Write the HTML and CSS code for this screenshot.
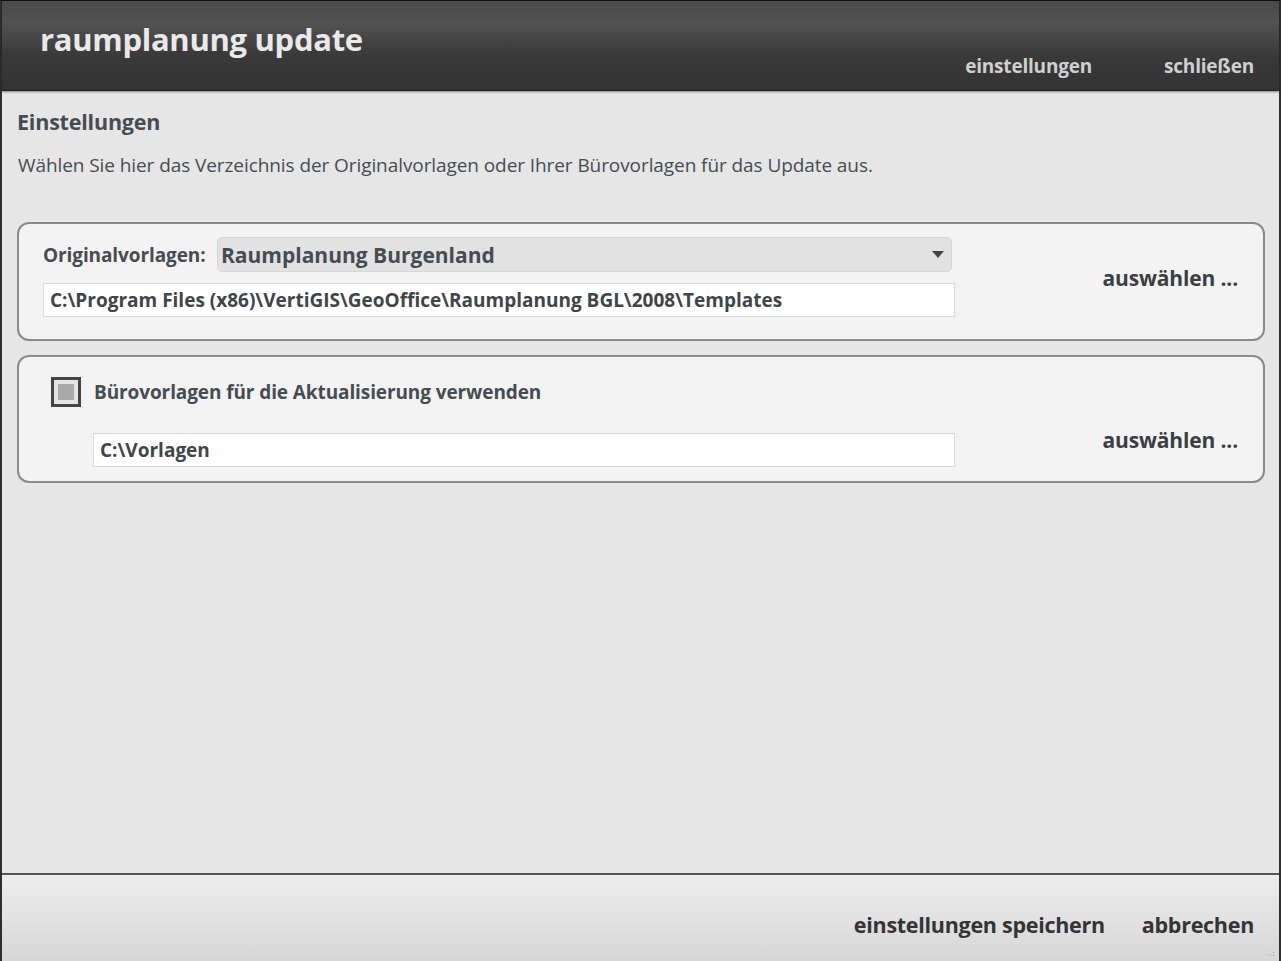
FILE: index.html
```
<!DOCTYPE html>
<html lang="de">
<head>
<meta charset="UTF-8">
<title>raumplanung update</title>
<link rel="stylesheet" href="styles.css">
</head>
<body>

<div class="window">

    <!-- TITLE BAR -->
    <header class="titlebar">
        <h1>raumplanung update</h1>
        <nav class="titlebar-nav">
            <a href="#">einstellungen</a>
            <a href="#">schließen</a>
        </nav>
    </header>

    <!-- CONTENT -->
    <main class="content">
        <h2>Einstellungen</h2>
        <p class="intro">Wählen Sie hier das Verzeichnis der Originalvorlagen oder Ihrer Bürovorlagen für das Update aus.</p>

        <section class="panel panel-original">
            <div class="fields">
                <div class="row">
                    <label class="field-label">Originalvorlagen:</label>
                    <div class="select">
                        <span>Raumplanung Burgenland</span>
                        <span class="caret"></span>
                    </div>
                </div>
                <div class="path">C:\Program Files (x86)\VertiGIS\GeoOffice\Raumplanung BGL\2008\Templates</div>
            </div>
            <a href="#" class="pick">auswählen ...</a>
        </section>

        <section class="panel panel-office">
            <div class="check-row">
                <span class="checkbox"><span></span></span>
                <span class="check-label">Bürovorlagen für die Aktualisierung verwenden</span>
            </div>
            <div class="office-row">
                <div class="path path-office">C:\Vorlagen</div>
                <a href="#" class="pick">auswählen ...</a>
            </div>
        </section>
    </main>

    <!-- FOOTER -->
    <footer class="actions">
        <a href="#">einstellungen speichern</a>
        <a href="#">abbrechen</a>
        <span class="grip"></span>
    </footer>

</div>

</body>
</html>
```

FILE: styles.css
```
* {
    margin: 0;
    padding: 0;
    box-sizing: border-box;
}

html, body {
    width: 100%;
    height: 100%;
    background: #1a1a1a;
    font-family: 'Open Sans', 'Noto Sans', Arial, sans-serif;
    color: #454d52;
    overflow: hidden;
}

a {
    text-decoration: none;
    color: inherit;
}

.window {
    height: 961px;
    display: flex;
    flex-direction: column;
    border-left: 2px solid #2e2e2e;
    border-right: 2px solid #2e2e2e;
    border-top: 1px solid #111;
    background: #e6e6e6;
}

/* =======================
     TITLE BAR
======================== */
.titlebar {
    height: 90px;
    display: flex;
    justify-content: space-between;
    background: linear-gradient(180deg, #4a4a4a 0%, #525252 25%, #3a3a3a 60%, #333 100%);
    border-bottom: 1px solid #222;
    box-shadow: 0 1px 2px rgba(0,0,0,0.45);
    position: relative;
    z-index: 1;
}

.titlebar h1 {
    font-size: 31px;
    font-weight: 700;
    color: #e9e9e9;
    padding: 17px 0 0 38px;
    letter-spacing: -0.3px;
    line-height: 42px;
}

.titlebar-nav {
    display: flex;
    align-items: flex-end;
    gap: 72px;
    padding: 0 25px 11px 0;
}

.titlebar-nav a {
    font-size: 19px;
    font-weight: 700;
    color: #cfcfcf;
    letter-spacing: -0.2px;
}

/* =======================
     CONTENT
======================== */
.content {
    flex: 1;
    padding: 16px 14px 0 15px;
}

.content h2 {
    font-size: 21.5px;
    font-weight: 700;
    line-height: 30px;
    letter-spacing: -0.2px;
}

.intro {
    font-size: 19px;
    line-height: 26px;
    margin-top: 15px;
    letter-spacing: -0.08px;
    padding-left: 1px;
}

.panel {
    background: #f3f3f3;
    border: 2px solid #8a8a8a;
    border-radius: 12px;
}

.panel-original {
    margin-top: 44px;
    height: 119px;
    display: flex;
    align-items: flex-start;
    padding: 13px 25px 0 24px;
}

.fields {
    width: 912px;
    display: flex;
    flex-direction: column;
    gap: 11px;
}

.row {
    display: flex;
    align-items: center;
}

.field-label {
    font-size: 19px;
    font-weight: 700;
    width: 174px;
    letter-spacing: -0.1px;
}

.select {
    width: 735px;
    height: 35px;
    display: flex;
    align-items: center;
    justify-content: space-between;
    padding: 0 7px 0 3px;
    background: #e2e2e2;
    border: 1px solid #d6d6d6;
    border-radius: 5px;
    font-size: 21px;
    font-weight: 700;
}

.caret {
    width: 0;
    height: 0;
    border-left: 6px solid transparent;
    border-right: 6px solid transparent;
    border-top: 7px solid #444;
}

.path {
    height: 34px;
    background: #fff;
    border: 1px solid #dcdcdc;
    padding: 0 6px;
    font-size: 19px;
    font-weight: 700;
    line-height: 32px;
    color: #3f4649;
}

.pick {
    margin-left: auto;
    font-size: 21px;
    font-weight: 700;
    letter-spacing: -0.15px;
    color: #3a3f42;
}

.panel-original .pick {
    align-self: center;
    margin-bottom: 20px;
}

.panel-office {
    margin-top: 14px;
    height: 128px;
    padding: 20px 25px 0 32px;
}

.check-row {
    display: flex;
    align-items: center;
    gap: 13px;
}

.checkbox {
    width: 30px;
    height: 30px;
    border: 3px solid #444;
    background: #e4e4e4;
    padding: 4px;
}

.checkbox span {
    display: block;
    width: 100%;
    height: 100%;
    background: #a9a9a9;
}

.check-label {
    font-size: 19px;
    font-weight: 700;
    letter-spacing: -0.1px;
}

.office-row {
    display: flex;
    align-items: center;
    margin-top: 19px;
    padding-left: 42px;
}

.office-row .pick {
    margin-bottom: 20px;
}

.path-office {
    width: 862px;
}

/* =======================
     FOOTER
======================== */
.actions {
    height: 88px;
    display: flex;
    justify-content: flex-end;
    align-items: flex-end;
    gap: 37px;
    padding: 0 25px 22px 0;
    background: linear-gradient(180deg, #ececec 0%, #e2e2e2 50%, #d6d6d6 100%);
    border-top: 2px solid #555;
    position: relative;
}

.actions a {
    font-size: 21.5px;
    font-weight: 700;
    letter-spacing: -0.28px;
    color: #343434;
}

.grip {
    position: absolute;
    right: 3px;
    bottom: 3px;
    width: 10px;
    height: 10px;
    background: radial-gradient(circle, #9a9a9a 40%, transparent 45%) 0 0 / 3px 3px;
    clip-path: polygon(100% 0, 100% 100%, 0 100%);
}
```
